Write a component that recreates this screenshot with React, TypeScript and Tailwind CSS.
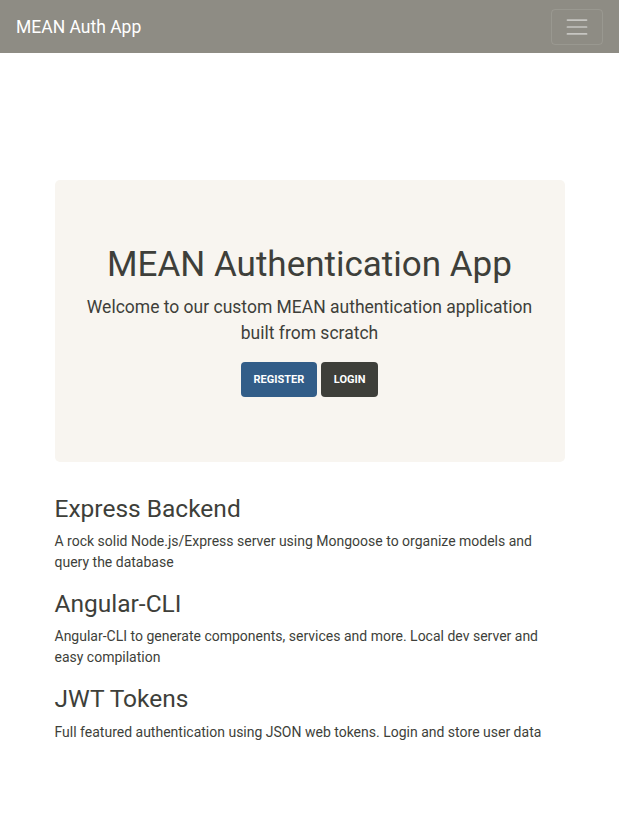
const features = [
  {
    title: "Express Backend",
    text: "A rock solid Node.js/Express server using Mongoose to organize models and query the database",
  },
  {
    title: "Angular-CLI",
    text: "Angular-CLI to generate components, services and more. Local dev server and easy compilation",
  },
  {
    title: "JWT Tokens",
    text: "Full featured authentication using JSON web tokens. Login and store user data",
  },
];

function Navbar() {
  return (
    <nav className="flex h-[53px] items-center justify-between bg-[#8e8c84] px-4">
      <a href="#" className="text-[17.5px] leading-[26px] text-white">
        MEAN Auth App
      </a>
      <button className="flex h-[36px] w-[52px] items-center justify-center rounded-[4px] border border-white/10">
        <svg width="26" height="26" viewBox="0 0 30 30">
          <path
            d="M4 7h22M4 15h22M4 23h22"
            stroke="rgba(255,255,255,0.5)"
            strokeWidth="2"
            strokeLinecap="round"
          />
        </svg>
      </button>
    </nav>
  );
}

export default function App() {
  return (
    <div className="min-h-[817px] bg-white font-['Roboto','Liberation_Sans',sans-serif] text-[14px] leading-[21px] text-[#3e3f3a]">
      <Navbar />
      <main className="mx-auto mt-[127px] w-[540px] px-[15px]">
        <section className="mb-8 rounded-[5px] bg-[#f8f5f0] px-8 pt-16 pb-[65px] text-center">
          <h1 className="mb-2 text-[35px] leading-[42px] font-normal">MEAN Authentication App</h1>
          <p className="mb-[15px] text-[17.5px] leading-[26.25px] font-normal">
            Welcome to our custom MEAN authentication application built from scratch
          </p>
          <div className="flex justify-center gap-[3.5px]">
            <a
              href="#"
              className="flex h-[35px] items-center rounded-[4px] bg-[#325d88] px-[13px] text-[11px] font-bold uppercase text-white"
            >
              Register
            </a>
            <a
              href="#"
              className="flex h-[35px] items-center rounded-[4px] bg-[#3e3f3a] px-[13px] text-[11px] font-bold uppercase text-white"
            >
              Login
            </a>
          </div>
        </section>

        {features.map((f) => (
          <div key={f.title}>
            <h3 className="mb-2 text-[24.5px] leading-[29.4px] font-normal">{f.title}</h3>
            <p className="mb-4">{f.text}</p>
          </div>
        ))}
      </main>
    </div>
  );
}
